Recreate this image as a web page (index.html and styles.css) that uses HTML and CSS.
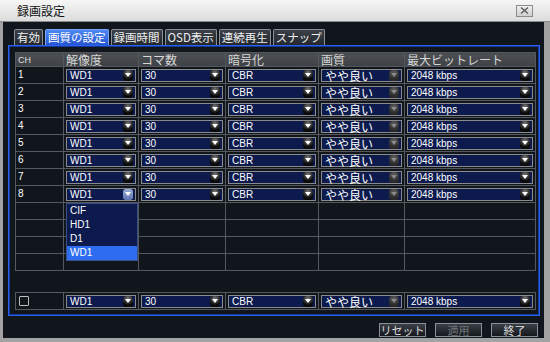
FILE: index.html
```html
<!DOCTYPE html>
<html lang="ja">
<head>
    <meta charset="UTF-8">
    <title>録画設定</title>
    <link rel="stylesheet" href="styles.css">
</head>
<body>
    <div class="window">
        <div class="titlebar">
            <span class="title">録画設定</span>
            <span class="close">
                <svg width="9" height="7" viewBox="0 0 9 7"><path d="M1 0.5 L8 6.5 M8 0.5 L1 6.5" stroke="#555" stroke-width="1.3" fill="none"/></svg>
            </span>
        </div>
        <div class="content">
            <div class="tabs">
                <div class="tab">有効</div>
                <div class="tab active">画質の設定</div>
                <div class="tab">録画時間</div>
                <div class="tab">OSD表示</div>
                <div class="tab">連続再生</div>
                <div class="tab">スナップ</div>
            </div>
            <div class="panel">
                <table class="grid" id="main-grid">
                    <colgroup>
                        <col class="c-ch"><col class="c-res"><col class="c-fps"><col class="c-enc"><col class="c-q"><col class="c-bit">
                    </colgroup>
                    <tr class="head">
                        <th class="ch">CH</th>
                        <th>解像度</th>
                        <th>コマ数</th>
                        <th>暗号化</th>
                        <th>画質</th>
                        <th>最大ビットレート</th>
                    </tr>
                </table>
                <table class="grid all-row">
                    <colgroup>
                        <col class="c-ch"><col class="c-res"><col class="c-fps"><col class="c-enc"><col class="c-q"><col class="c-bit">
                    </colgroup>
                    <tr>
                        <td><span class="check"></span></td>
                        <td><div class="sel"><span class="val">WD1</span><span class="arr"></span></div></td>
                        <td><div class="sel"><span class="val">30</span><span class="arr"></span></div></td>
                        <td><div class="sel"><span class="val">CBR</span><span class="arr"></span></div></td>
                        <td><div class="sel"><span class="val jp">やや良い</span><span class="arr off"></span></div></td>
                        <td><div class="sel"><span class="val">2048 kbps</span><span class="arr"></span></div></td>
                    </tr>
                </table>
            </div>
            <div class="buttons">
                <button class="btn">リセット</button>
                <button class="btn dim">適用</button>
                <button class="btn">終了</button>
            </div>
        </div>
    </div>
    <script>
        function selectBox(value, opts) {
            opts = opts || {};
            let cls = 'arr';
            if (opts.off) cls += ' off';
            if (opts.open) cls += ' open';
            let html = '<div class="sel"><span class="val' + (opts.jp ? ' jp' : '') + '">' + value + '</span><span class="' + cls + '"></span>';
            if (opts.open) {
                html += '<div class="list">' + ['CIF', 'HD1', 'D1', 'WD1'].map(function (o) {
                    return '<div class="item' + (o === value ? ' hl' : '') + '">' + o + '</div>';
                }).join('') + '</div>';
            }
            return html + '</div>';
        }

        function buildGrid() {
            const grid = document.getElementById('main-grid');
            for (let ch = 1; ch <= 12; ch++) {
                const row = document.createElement('tr');
                if (ch <= 8) {
                    row.innerHTML =
                        '<td class="num">' + ch + '</td>' +
                        '<td>' + selectBox('WD1', { open: ch === 8 }) + '</td>' +
                        '<td>' + selectBox('30') + '</td>' +
                        '<td>' + selectBox('CBR') + '</td>' +
                        '<td>' + selectBox('やや良い', { jp: true, off: true }) + '</td>' +
                        '<td>' + selectBox('2048 kbps') + '</td>';
                } else {
                    row.innerHTML = '<td></td><td></td><td></td><td></td><td></td><td></td>';
                }
                grid.appendChild(row);
            }
        }

        buildGrid();
    </script>
</body>
</html>
```

FILE: styles.css
```css
body { margin: 0; background: #9a9a9a; font-family: "Liberation Sans", "Noto Sans CJK JP", sans-serif; }
.window { width: 550px; height: 342px; display: flex; flex-direction: column; overflow: hidden; }

.titlebar {
    height: 21px;
    display: flex;
    align-items: center;
    justify-content: space-between;
    background: linear-gradient(#f6f6f6, #dcdcdc);
    border-bottom: 1px solid #8a8a8a;
    padding: 0 17px 0 17px;
}
.title { font-family: "Noto Sans CJK JP", sans-serif; font-size: 12px; color: #111; }
.close {
    width: 15px;
    height: 10px;
    display: flex;
    align-items: center;
    justify-content: center;
    background: linear-gradient(#f0f0f0, #cfcfcf);
    border: 1px solid #8c8c8c;
}

.content {
    flex: 1;
    background: #11161c;
    border-left: 3px solid #a3a3a3;
    border-right: 6px solid #a3a3a3;
    border-bottom: 4px solid #a3a3a3;
    padding-top: 7px;
}

.tabs { display: flex; gap: 2px; margin-left: 11px; height: 16px; }
.tab {
    font-family: "Noto Sans CJK JP", sans-serif;
    font-size: 11.5px;
    line-height: 15px;
    color: #eee;
    padding: 0 2px;
    background: linear-gradient(#3b4048, #24292f);
    border: 1px solid #8a9098;
    border-bottom: none;
    border-radius: 2px 2px 0 0;
}
.tab.active { background: linear-gradient(#4e86f2, #2656d2); border-color: #7aa6f8; color: #fff; }

.panel {
    margin: 0 4px 0 5px;
    border: 1px solid #2c5ff0;
    box-shadow: inset 0 0 0 1px #163a9a;
    padding: 6px 6px 5px 6px;
}

.grid { border-collapse: collapse; table-layout: fixed; width: 520px; border: 1px solid #6c6f73; }
.c-ch { width: 48px; }
.c-res { width: 75px; }
.c-fps { width: 87px; }
.c-enc { width: 93px; }
.c-q { width: 86px; }
.c-bit { width: 131px; }
.grid tr { height: 17px; }
.grid tr.head { height: 14px; }
.grid th, .grid td { border: 1px solid #55585c; padding: 0 2px; }
.grid th {
    background: linear-gradient(#4c4f53, #3e4145);
    color: #d6d6d6;
    font-family: "Noto Sans CJK JP", sans-serif;
    font-weight: normal;
    font-size: 12px;
    line-height: 12px;
    text-align: left;
}
.grid th.ch { font-family: "Liberation Sans", sans-serif; font-size: 9px; color: #ddd; }
.grid td { color: #fff; font-size: 10px; line-height: 11px; }
.grid td.num { vertical-align: top; padding-top: 2px; }

.all-row { margin-top: 21px; }
.check { display: block; width: 8px; height: 8px; border: 1px solid #bdbdbd; border-radius: 1px; margin-left: 1px; }

.sel {
    position: relative;
    display: flex;
    height: 11px;
    border: 1px solid #8a8a8a;
    background: #0c1a4d;
}
.val { flex: 1; padding-left: 3px; font-size: 10px; line-height: 11px; color: #fff; white-space: nowrap; }
.val.jp { font-family: "Noto Sans CJK JP", sans-serif; font-size: 12px; line-height: 11px; }
.arr {
    width: 10px;
    margin: 0 2px 0 0;
    display: flex;
    align-items: center;
    justify-content: center;
    background: radial-gradient(circle at 50% 25%, #7a7a7a, #0a0a0a 65%);
    border-radius: 3px;
}
.arr::after {
    content: "";
    border-left: 3px solid transparent;
    border-right: 3px solid transparent;
    border-top: 4px solid #fff;
}
.arr.off { background: radial-gradient(circle at 50% 25%, #5e5e5e, #2a2a2a 65%); }
.arr.off::after { border-top-color: #8a8a8a; }
.arr.open { background: linear-gradient(#9aaed8, #5d76b0); }

.list {
    position: absolute;
    left: -1px;
    top: 14px;
    width: 70px;
    background: #0c1a4d;
    border: 1px solid #3a4f86;
    z-index: 2;
}
.item { height: 14px; line-height: 14px; padding-left: 3px; font-size: 10px; color: #fff; }
.item.hl { background: #2f6df0; }

.buttons { display: flex; justify-content: flex-end; gap: 9px; margin: 7px 6px 0 0; }
.btn {
    box-sizing: border-box;
    width: 47px;
    height: 14px;
    padding: 0;
    font-family: "Noto Sans CJK JP", sans-serif;
    font-size: 11px;
    line-height: 12px;
    color: #ddd;
    background: linear-gradient(#3a3f46, #15191e);
    border: 1px solid #8a8f95;
}
.btn.dim { color: #6e7277; }
```
